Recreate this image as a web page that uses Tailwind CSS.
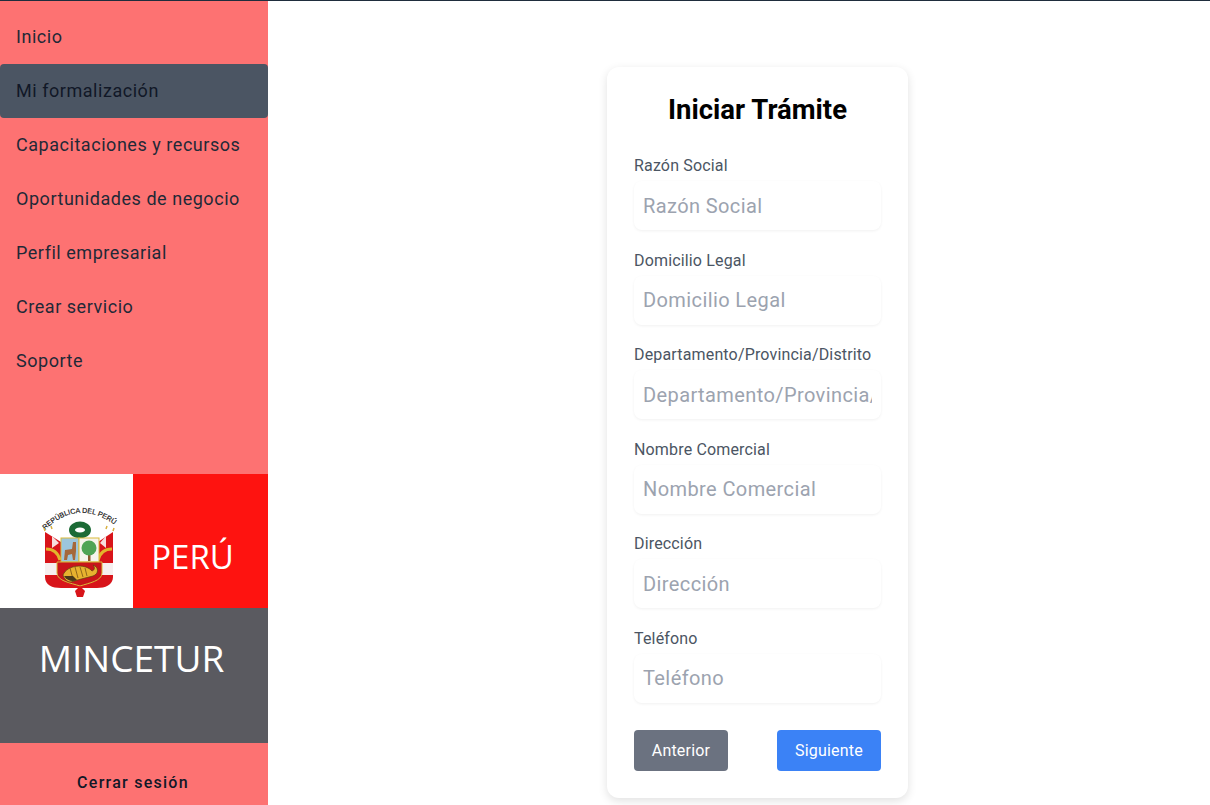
<!DOCTYPE html>
<html lang="es">
<head>
  <meta charset="UTF-8" />
  <title>Iniciar Trámite</title>
  <script src="https://cdn.jsdelivr.net/npm/@tailwindcss/browser@4"></script>
</head>
<body class="bg-white font-['Roboto',sans-serif] h-[805px] overflow-hidden">
  <div class="h-px bg-[#1f2d3d]"></div>
  <div class="flex h-[804px]">

    <!-- Sidebar -->
    <aside class="w-[268px] shrink-0 bg-[#fd7272] flex flex-col">
      <nav class="h-[473px] pt-[9px] text-[18px] tracking-[0.54px] text-[#1f2937]">
        <a class="h-[54px] flex items-center px-4 pb-[2px]">Inicio</a>
        <a class="h-[54px] flex items-center px-4 pb-[2px] bg-[#4b5563] rounded text-[#111827]">Mi formalización</a>
        <a class="h-[54px] flex items-center px-4 pb-[2px]">Capacitaciones y recursos</a>
        <a class="h-[54px] flex items-center px-4 pb-[2px]">Oportunidades de negocio</a>
        <a class="h-[54px] flex items-center px-4 pb-[2px]">Perfil empresarial</a>
        <a class="h-[54px] flex items-center px-4 pb-[2px]">Crear servicio</a>
        <a class="h-[54px] flex items-center px-4 pb-[2px]">Soporte</a>
      </nav>

      <div class="flex h-[134px]">
        <div class="w-[133px] bg-white pl-[43px] pt-[31px]">
          <svg width="76" height="93" viewBox="0 0 76 93" class="overflow-visible">
            <defs><path id="arc" d="M2 25 Q37 -9 77 24" /></defs>
            <text font-family="Liberation Sans" font-size="7.100" fill="#111" stroke="#111" stroke-width="0.150"><textPath href="#arc">REPÚBLICA DEL PERÚ</textPath></text>
            <!-- flags -->
            <path d="M2 27 L18 37 V60 H2 Z" fill="#d8141a" />
            <path d="M70 27 L55 37 V60 H70 Z" fill="#d8141a" />
            <path d="M9 31 L16 38 L9 43 Z" fill="#f7dede" />
            <path d="M63 31 L57 38 L63 43 Z" fill="#f7dede" />
            <path d="M2 26 L1 23 M9 24 L8 21 M70 26 L71 23 M63 24 L64 21" stroke="#d8b040" stroke-width="1.500" />
            <path d="M3 44 Q14 44 17 55" fill="none" stroke="#e2b52c" stroke-width="3" />
            <path d="M69 44 Q58 44 55 55" fill="none" stroke="#e2b52c" stroke-width="3" />
            <rect x="2" y="58" width="68" height="13" fill="#f6efef" />
            <path d="M2 70 H70 V72 C70 80 62 83 54 83 H18 C9 83 2 80 2 72 Z" fill="#d8141a" />
            <!-- wreath -->
            <ellipse cx="37" cy="25" rx="8" ry="5.500" fill="none" stroke="#1c6b36" stroke-width="6" />
            <!-- shield -->
            <rect x="18" y="33" width="18" height="24" fill="#9cc6dc" stroke="#d9b93a" />
            <rect x="36" y="33" width="20" height="24" fill="#f6f4ec" stroke="#d9b93a" />
            <path d="M21 55 L22 45 L29 44 L30 37 L33 37 L33 46 L32 55 L30 55 L29 49 L25 50 L24 55 Z" fill="#a5683a" />
            <rect x="45" y="44" width="2.500" height="12" fill="#8a5a2c" />
            <circle cx="46" cy="43" r="7.500" fill="#4fa455" />
            <path d="M14 57 H59 V68 C59 76 46 78 37 81 C28 78 14 76 14 68 Z" fill="#c8141a" stroke="#d9b93a" />
            <!-- cornucopia -->
            <path d="M20 70 C24 60 42 58 49 66 C52 65 52 62 50 60 C56 62 56 69 50 71 C42 73 34 75 28 77 C24 77 21 74 20 70 Z" fill="#e7b22f" stroke="#5a3d10" stroke-width="0.700" />
            <path d="M27 63 L30 74 M32 62 L35 73 M37 62 L40 72 M42 63 L44 71" stroke="#7a5214" stroke-width="0.800" />
            <path d="M21 71 C24 76 30 77 34 75 L30 71 Z" fill="#4a3a1a" />
            <path d="M32 86 L37 81 L42 86 L40 92 H34 Z" fill="#d8141a" />
          </svg>
        </div>
        <div class="w-[135px] bg-[#fe1310] flex items-center justify-center pt-[32px] pr-[16px] text-white text-[33px] font-['Open_Sans',sans-serif]">PERÚ</div>
      </div>
      <div class="h-[135px] bg-[#5a5a60] flex justify-center pt-[25px] pr-[5px] text-white text-[37px] leading-[50px] font-['Open_Sans',sans-serif]">MINCETUR</div>
      <div class="flex-1 flex items-center justify-center pt-[18px] pr-[2px] text-[16px] font-medium tracking-[1.260px] text-[#111827]">Cerrar sesión</div>
    </aside>

    <!-- Form -->
    <main class="flex-1 flex justify-center items-start pt-[66px] pl-[37px]">
      <form class="w-[301px] h-[731px] bg-white rounded-xl shadow-[0_3px_10px_rgba(0,0,0,0.12)] px-[27px] pt-[27px]">
        <h2 class="text-[27.500px] leading-[32px] font-bold text-black text-center mb-[28px]">Iniciar Trámite</h2>
        <div class="flex flex-col gap-[18.500px]">
          <label class="block">
            <span class="block text-[16px] leading-[24px] tracking-[0.16px] text-[#4b5563] mb-[3px]">Razón Social</span>
            <input placeholder="Razón Social" class="w-full h-[49px] px-[9px] rounded-lg shadow-[0_1px_3px_rgba(0,0,0,0.06)] text-[20px] tracking-[0.4px] placeholder:text-[#9ca3af] outline-none" />
          </label>
          <label class="block">
            <span class="block text-[16px] leading-[24px] tracking-[0.16px] text-[#4b5563] mb-[3px]">Domicilio Legal</span>
            <input placeholder="Domicilio Legal" class="w-full h-[49px] px-[9px] rounded-lg shadow-[0_1px_3px_rgba(0,0,0,0.06)] text-[20px] tracking-[0.4px] placeholder:text-[#9ca3af] outline-none" />
          </label>
          <label class="block">
            <span class="block text-[16px] leading-[24px] tracking-[0.16px] text-[#4b5563] mb-[3px]">Departamento/Provincia/Distrito</span>
            <input placeholder="Departamento/Provincia/Distrito" class="w-full h-[49px] px-[9px] rounded-lg shadow-[0_1px_3px_rgba(0,0,0,0.06)] text-[20px] tracking-[0.4px] placeholder:text-[#9ca3af] outline-none" />
          </label>
          <label class="block">
            <span class="block text-[16px] leading-[24px] tracking-[0.16px] text-[#4b5563] mb-[3px]">Nombre Comercial</span>
            <input placeholder="Nombre Comercial" class="w-full h-[49px] px-[9px] rounded-lg shadow-[0_1px_3px_rgba(0,0,0,0.06)] text-[20px] tracking-[0.4px] placeholder:text-[#9ca3af] outline-none" />
          </label>
          <label class="block">
            <span class="block text-[16px] leading-[24px] tracking-[0.16px] text-[#4b5563] mb-[3px]">Dirección</span>
            <input placeholder="Dirección" class="w-full h-[49px] px-[9px] rounded-lg shadow-[0_1px_3px_rgba(0,0,0,0.06)] text-[20px] tracking-[0.4px] placeholder:text-[#9ca3af] outline-none" />
          </label>
          <label class="block">
            <span class="block text-[16px] leading-[24px] tracking-[0.16px] text-[#4b5563] mb-[3px]">Teléfono</span>
            <input placeholder="Teléfono" class="w-full h-[49px] px-[9px] rounded-lg shadow-[0_1px_3px_rgba(0,0,0,0.06)] text-[20px] tracking-[0.4px] placeholder:text-[#9ca3af] outline-none" />
          </label>
        </div>
        <div class="flex justify-between mt-[27px]">
          <button type="button" class="w-[94px] h-[41px] pt-[1px] rounded bg-[#6b7280] text-white text-[16px] tracking-[0.2px]">Anterior</button>
          <button type="button" class="w-[104px] h-[41px] pt-[1px] rounded bg-[#3b82f6] text-white text-[16px] tracking-[0.2px]">Siguiente</button>
        </div>
      </form>
    </main>
  </div>
</body>
</html>
